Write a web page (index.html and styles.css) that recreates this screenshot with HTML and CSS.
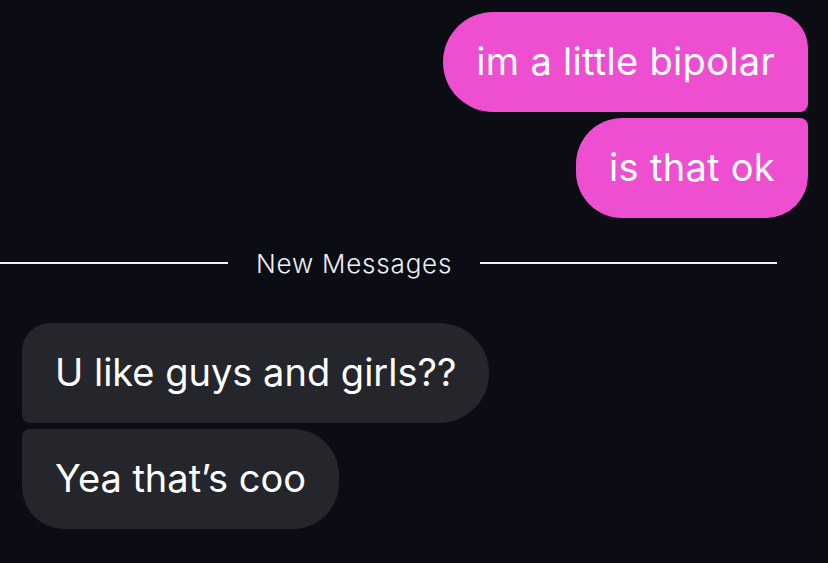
FILE: index.html
```html
<!DOCTYPE html>
<html>
<head>
    <title>Chat</title>
    <link rel="stylesheet" href="styles.css">
</head>
<body>
    <div class="thread">
        <div class="group out">
            <div class="bubble first">im a little bipolar</div>
            <div class="bubble last">is that ok</div>
        </div>
        <div class="divider">
            <span class="line left"></span>
            <span class="label">New Messages</span>
            <span class="line right"></span>
        </div>
        <div class="group in">
            <div class="bubble first">U like guys and girls??</div>
            <div class="bubble last">Yea that’s coo</div>
        </div>
    </div>
</body>
</html>
```

FILE: styles.css
```css
body {
    margin: 0;
    background-color: #0b0c14;
    font-family: Inter, "Noto Sans", sans-serif;
    color: #ffffff;
}
.thread {
    display: flex;
    flex-direction: column;
    padding-top: 12px;
}
.group {
    display: flex;
    flex-direction: column;
    gap: 6px;
}
.group.out {
    align-items: flex-end;
    padding-right: 20px;
}
.group.in {
    align-items: flex-start;
    padding-left: 22px;
    margin-top: 45px;
}
.bubble {
    height: 100px;
    box-sizing: border-box;
    padding: 0 33px 2px;
    display: flex;
    align-items: center;
    font-size: 38px;
}
.out .bubble {
    background-color: #ee4fd1;
    letter-spacing: 0.3px;
}
.in .bubble {
    background-color: #25262b;
    letter-spacing: 0;
}
.out .first {
    border-radius: 50px 36px 8px 50px;
}
.out .last {
    border-radius: 46px 8px 42px 46px;
}
.in .first {
    border-radius: 28px 50px 50px 8px;
}
.in .last {
    border-radius: 8px 46px 46px 42px;
}
.divider {
    display: flex;
    align-items: center;
    height: 30px;
    margin-top: 30px;
    padding-right: 51px;
}
.line {
    height: 2px;
    background-color: #f2f2f2;
}
.line.left {
    width: 228px;
}
.line.right {
    flex: 1;
}
.label {
    padding: 0 28px;
    font-size: 26px;
    font-weight: 300;
    color: #f0f0f4;
    letter-spacing: 0.8px;
}
```
